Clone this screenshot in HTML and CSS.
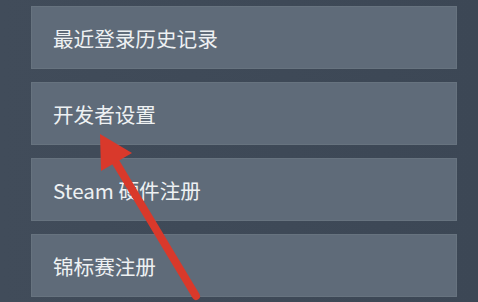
FILE: index.html
```html
<!DOCTYPE html>
<html lang="zh-CN">

<head>
  <meta charset="UTF-8" />
  <meta name="viewport" content="width=device-width, initial-scale=1.0" />
  <title>Steam 设置</title>
  <link rel="stylesheet" href="styles.css">
</head>

<body>
  <div class="menu">
    <div class="menu-item">最近登录历史记录</div>
    <div class="menu-item">开发者设置</div>
    <div class="menu-item">Steam 硬件注册</div>
    <div class="menu-item">锦标赛注册</div>
  </div>

  <svg class="pointer" width="478" height="302" viewBox="0 0 478 302">
    <line x1="112" y1="156" x2="196" y2="296" stroke="#d9392b" stroke-width="8" stroke-linecap="round" />
    <polygon points="100,134 132,153 101,171" fill="#d9392b" />
  </svg>
</body>

</html>
```

FILE: styles.css
```css
body {
  margin: 0;
  width: 478px;
  height: 302px;
  overflow: hidden;
  background: linear-gradient(to right, #414c5a, #3c4755);
  font-family: "Noto Sans CJK SC", "Noto Sans", sans-serif;
}

.menu {
  display: flex;
  flex-direction: column;
  gap: 13px;
  padding: 6px 0 0 31px;
}

.menu-item {
  width: 426px;
  height: 63px;
  box-sizing: border-box;
  display: flex;
  align-items: center;
  padding-left: 21px;
  background: #5f6b79;
  border: 1px solid #67737f;
  color: #eef1f3;
  font-size: 20.6px;
}

.pointer {
  position: absolute;
  top: 0;
  left: 0;
}
```
